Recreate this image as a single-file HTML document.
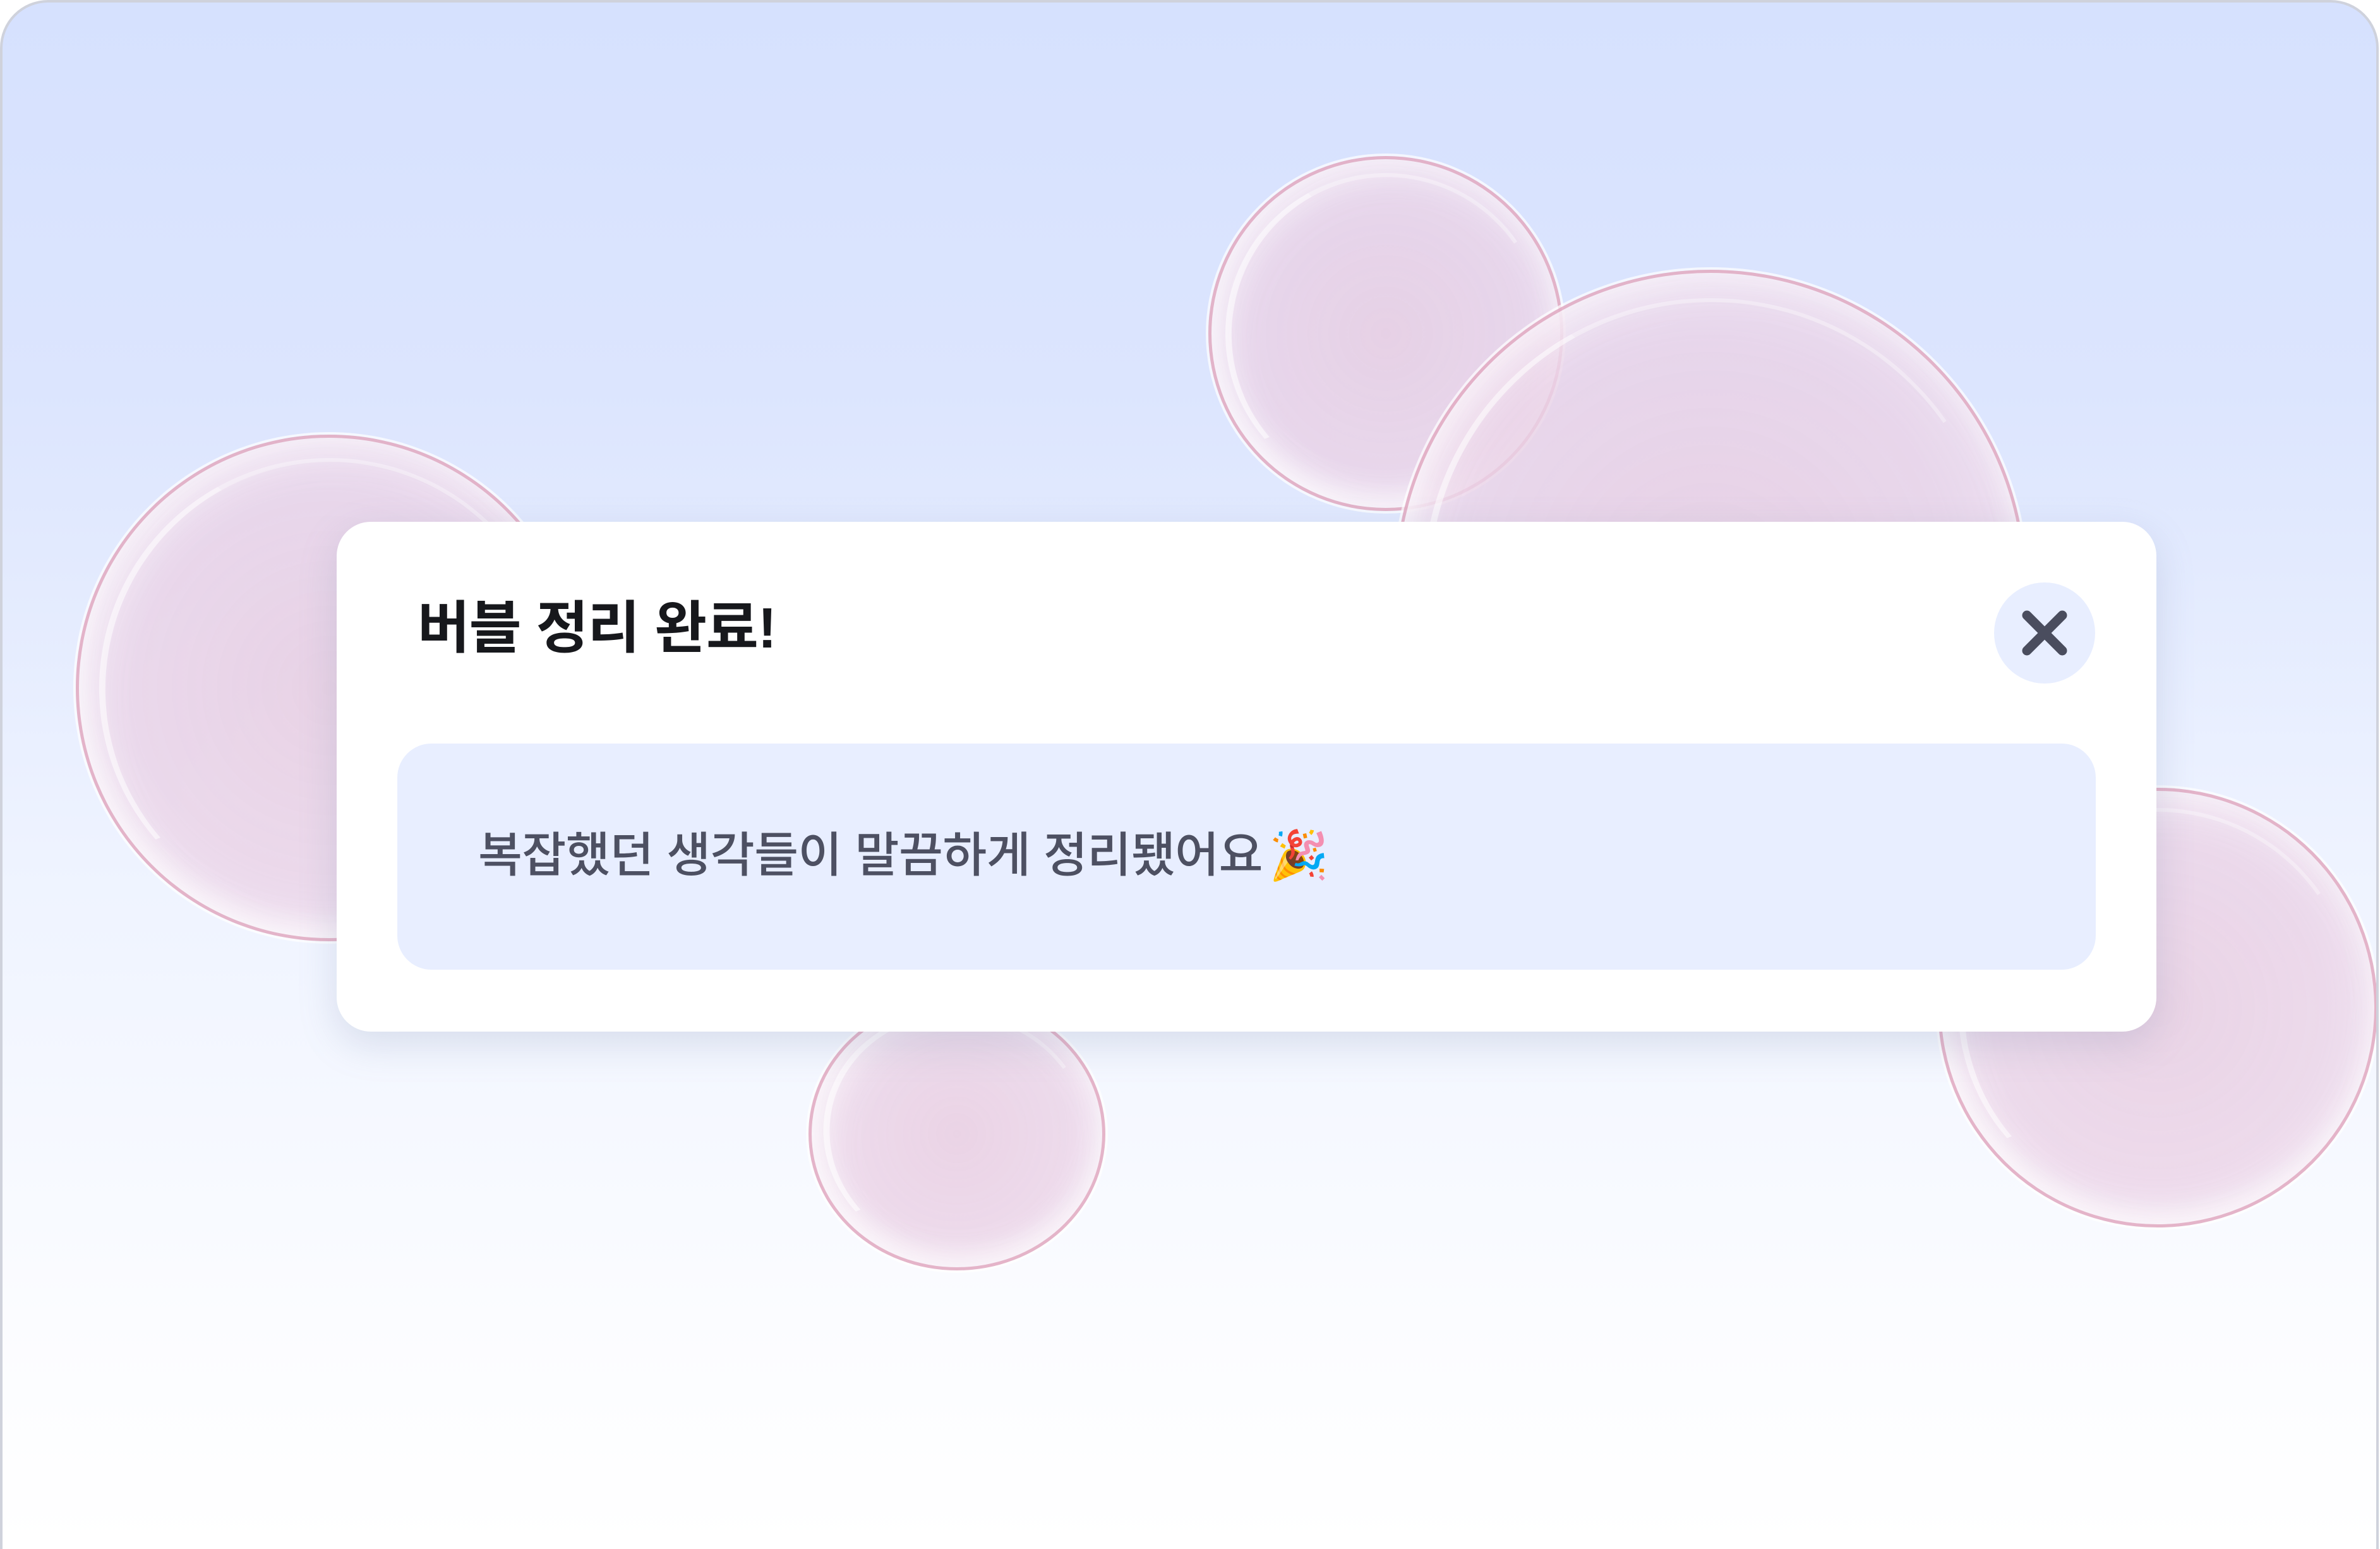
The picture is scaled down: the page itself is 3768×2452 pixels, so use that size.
<!DOCTYPE html>
<html><head><meta charset="utf-8"><style>
html,body{margin:0;padding:0;width:3768px;height:2452px;overflow:hidden;background:#fff;}
.frame{position:absolute;left:0;top:0;width:3766px;height:2452px;border:4px solid #cfd2dc;border-bottom:none;border-radius:76px 76px 0 0;box-sizing:border-box;overflow:hidden;
background:linear-gradient(180deg,#d6e1fe 0%,#dce5fe 25%,#eef3ff 55%,#fbfcff 85%,#ffffff 100%);}
.b{position:absolute;border-radius:50%;box-sizing:border-box;
background:radial-gradient(circle at 50% 50%,rgba(232,205,225,0.85) 0%,rgba(234,210,230,0.8) 55%,rgba(240,225,240,0.85) 80%,rgba(248,240,250,0.9) 95%);
border:5px solid rgba(220,150,175,0.6);
box-shadow:0 0 0 4px rgba(255,255,255,0.7), inset 0 -20px 40px rgba(255,255,255,0.6), inset 20px 20px 60px rgba(255,255,255,0.5);}
.b::before{content:"";position:absolute;left:4%;top:4%;width:92%;height:92%;border-radius:50%;box-sizing:border-box;
border-left:10px solid rgba(255,255,255,0.55);border-top:6px solid rgba(255,255,255,0.35);border-right:6px solid transparent;border-bottom:6px solid transparent;transform:rotate(10deg);}
.modal{position:absolute;left:529px;top:822px;width:2881px;height:807px;background:#fff;border-radius:54px;box-shadow:0 20px 60px rgba(120,130,170,0.22);}
.title{position:absolute;left:128px;top:114px;font-family:"Liberation Sans","Noto Sans CJK KR",sans-serif;font-weight:700;font-size:90px;color:#17181c;line-height:110px;letter-spacing:-1px;}
.close{position:absolute;left:2624px;top:96px;width:160px;height:160px;border-radius:50%;background:#e8eeff;}
.inner{position:absolute;left:96px;top:351px;width:2689px;height:358px;background:#e8eeff;border-radius:54px;}
.txt{position:absolute;left:128px;top:128px;font-family:"Liberation Sans","Noto Sans CJK KR",sans-serif;font-size:76px;color:#4d5062;line-height:100px;font-weight:500;letter-spacing:-0.5px;white-space:nowrap;}
.em{margin-left:10px;}
</style></head><body>
<div class="frame">
<div class="b" style="left:116px;top:684px;width:802px;height:802px;"></div>
<div class="b" style="left:1909px;top:243px;width:562px;height:562px;"></div>
<div class="b" style="left:2204px;top:423px;width:1000px;height:1000px;"></div>
<div class="b" style="left:3064px;top:1243px;width:696px;height:696px;"></div>
<div class="b" style="left:1276px;top:1575px;width:470px;height:432px;"></div>
<div class="modal">
<div class="title">버블 정리 완료!</div>
<div class="close"><svg width="160" height="160" viewBox="0 0 160 160"><path d="M52 52 L108 108 M108 52 L52 108" stroke="#4a4d5e" stroke-width="15" stroke-linecap="round"/></svg></div>
<div class="inner"><div class="txt">복잡했던 생각들이 말끔하게 정리됐어요<span class="em">🎉</span></div></div>
</div>
</div>
</body></html>
